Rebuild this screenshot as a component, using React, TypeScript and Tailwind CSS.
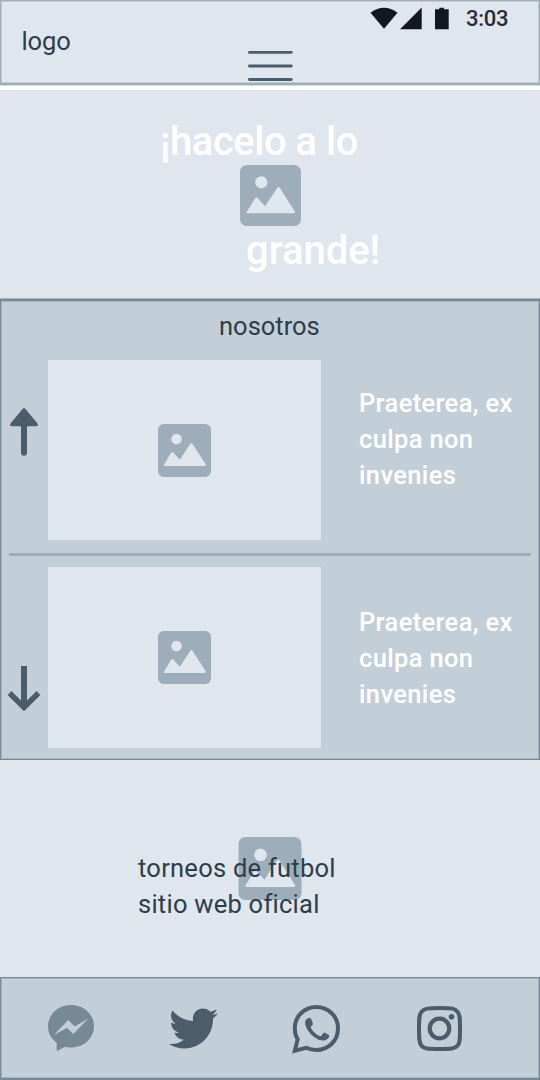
import { FaTwitter } from "react-icons/fa";

function Picture({ className }: { className: string }) {
  return (
    <svg viewBox="0 0 60 60" className={className} aria-hidden="true">
      <rect width="60" height="60" rx="6.5" fill="#9dadba" />
      <circle cx="21" cy="17" r="6" fill="#dfe6ee" />
      <path
        d="M6.8 46 L15 32.4 Q16 31 17.2 32.3 L24.7 40.6 L36.6 22.3 Q37.8 20.8 39 22.3 L53.8 45.4 Q54.5 47.5 53 47.5 H7.5 Q5.9 47.5 6.8 46 Z"
        fill="#dfe6ee"
      />
    </svg>
  );
}

function StatusIcons() {
  return (
    <svg viewBox="0 0 80 24" className="h-6 w-20" fill="#101820" aria-hidden="true">
      <path d="M0.5 6.8 Q14 -3.2 27.5 6.8 L14 22.8 Z" />
      <path d="M30 23.3 L51.7 1.5 V23.3 Z" />
      <path d="M65 3.2 H69.3 V1.8 H74 V3.2 H78.7 V23.3 H65 Z" />
    </svg>
  );
}

function Header() {
  return (
    <header className="flex h-[85px] border border-b-2 border-[#9dadba] bg-[#dfe6ee] shadow-[inset_0_0_0_1px_#c0cbd5,0_1px_0_#d5dde4]">
      <div className="w-[246.5px] pt-[23px] pl-[20.5px] text-[25.5px] leading-[34px] tracking-[-0.1px]">logo</div>
      <svg viewBox="0 0 46 32" className="mt-[49px] h-8 w-[46px] shrink-0" stroke="#4b5d6b" strokeWidth="2.8" strokeLinecap="round">
        <path d="M1.4 2.4 H43.3 M1.4 16 H43.3 M1.4 29.5 H43.3" />
      </svg>
      <div className="flex flex-1 items-start pt-[5px] pl-[76.5px]">
        <StatusIcons />
        <span className="ml-4 pt-px text-[22px] leading-6 font-medium tracking-[-0.3px] text-[#252d34]">3:03</span>
      </div>
    </header>
  );
}

function Story({ first }: { first?: boolean }) {
  return (
    <article className="flex pl-[6px]">
      <div className={first ? "w-[41px] pt-[46px]" : "w-[41px] pt-[98px]"}>
        {first ? (
          <svg viewBox="0 0 34 50" className="h-[50px] w-[34px]" fill="#4b5d6b">
            <path d="M15.5 2.9 Q17 1.5 18.5 2.9 L30.5 17.4 Q31.8 20 29.2 20.3 H20 V46.8 A3 3 0 0 1 14 46.8 V20.3 H4.8 Q2.2 20 3.5 17.4 Z" />
          </svg>
        ) : (
          <svg viewBox="0 0 34 50" className="h-[50px] w-[34px]" fill="none" stroke="#4b5d6b">
            <path d="M17 1 V42" strokeWidth="6" />
            <path d="M2.5 28 L17 42.3 L31.5 28" strokeWidth="5.5" />
          </svg>
        )}
      </div>
      <div className={first ? "flex h-[180px] w-[273px] justify-center bg-[#dfe6ee] pt-[63.5px]" : "flex h-[181px] w-[273px] justify-center bg-[#dfe6ee] pt-[63.5px]"}>
        <Picture className="h-[53px] w-[53px]" />
      </div>
      <p className={first ? "w-[170px] pt-[25px] pl-[38px] whitespace-nowrap text-[25.5px] leading-9 font-medium tracking-[0.35px] text-white" : "w-[170px] pt-[37px] pl-[38px] whitespace-nowrap text-[25.5px] leading-9 font-medium tracking-[0.35px] text-white"}>
        Praeterea, ex<br />culpa non<br />invenies
      </p>
    </article>
  );
}

function Footer() {
  return (
    <footer className="flex h-[103px] items-start border border-b-2 border-[#788996] bg-[#c3cfd8] pt-[26px] pl-[46px] shadow-[inset_0_0_0_1px_#a6b4bf]">
      <svg viewBox="0 0 48 50" className="h-[50px] w-12" fill="#788996">
        <path d="M24 1 C11 1 1 10.4 1 22.3 C1 29.3 4.3 35 9.7 38.7 V47.3 L18 42.8 C20 43.4 22 43.6 24 43.6 C37 43.6 47 34.2 47 22.3 C47 10.4 37 1 24 1 Z" />
        <path d="M7 31 L21.2 16 L27.6 22.5 L41 14.7 L26.3 30 L20 23.7 Z" fill="#c3cfd8" />
      </svg>
      <FaTwitter className="ml-[74px] h-[49px] w-[49px] text-[#4b5d6b]" />
      <svg viewBox="0 0 52 52" className="ml-[73px] h-[52px] w-[52px]" fill="none" stroke="#4b5d6b">
        <path d="M6.7 35.2 L3.8 46.8 L15.2 43.8 C18.5 45.3 21.8 46 25.3 46 C37.5 46 47 36.5 47 24.5 C47 12.5 37.5 3 25.3 3 C13 3 3.8 12.5 3.8 24.5 C3.8 28.4 4.7 32 6.7 35.2 Z" strokeWidth="4" />
        <path d="M14.2 17.2 C14.9 14.3 19.2 12.8 20.3 15.2 L21.8 19.2 C22.5 21.7 18.8 22 20 24 C22 27.7 25.4 31 29.3 32.3 C31.2 32.5 31.3 28.5 34 28.8 L37.7 31 C39.5 32.4 36.8 35.5 34 36.2 C25.5 38.3 13.2 25.8 14.2 17.2 Z" fill="#4b5d6b" stroke="none" />
      </svg>
      <svg viewBox="0 0 50 50" className="ml-[72px] h-[50px] w-[50px]" fill="none" stroke="#4b5d6b" strokeWidth="4">
        <path d="M24.5 4 C38 4 40 4.3 42.7 8 C45.2 10.7 45 15 45 24.5 C45 34 45.2 38.5 42.7 41.5 C40 45 36 45 24.5 45 C13 45 9 45 6.3 41.5 C4 38.5 4 34 4 24.5 C4 15 4 10.7 6.3 8 C9 4.3 13 4 24.5 4 Z" />
        <circle cx="24.5" cy="24.5" r="9.8" strokeWidth="4.2" />
        <circle cx="36.5" cy="12.7" r="2.8" fill="#4b5d6b" stroke="none" />
      </svg>
    </footer>
  );
}

export default function App() {
  return (
    <main className="flex h-[1080px] w-[540px] flex-col overflow-hidden bg-white font-[Roboto,sans-serif] text-[#2d3d49]">
      <Header />
      <section className="mt-[5px] flex h-[209px] flex-col bg-[#dfe6ee] pt-[29px] text-[40px] leading-[46px] font-medium text-white">
        <h1 className="pl-[160px] whitespace-nowrap tracking-[-0.5px]">¡hacelo a lo</h1>
        <Picture className="-mt-[0.5px] ml-[239.5px] h-[61px] w-[61px]" />
        <span className="mt-[2.5px] pl-[246px] tracking-[-0.05px]">grande!</span>
      </section>
      <section className="flex h-[461px] flex-col border border-t-2 border-[#788996] bg-[#c3cfd8] shadow-[inset_0_0_0_1px_#a6b4bf,0_-1px_0_#a6b4bf]">
        <h2 className="h-[59px] pt-[7px] pl-[218px] text-[25.5px] leading-9">nosotros</h2>
        <Story first />
        <div className="mx-2 mt-[13px] mb-[11px] h-[3px] shrink-0 bg-[#9dadba]" />
        <Story />
      </section>
      <section className="flex h-[217px] flex-col items-center bg-[#dfe6ee] pt-[77px]">
        <Picture className="h-[63px] w-[64px] shrink-0" />
        <p className="relative -mt-[50px] w-full pl-[138px] text-[25.5px] leading-9 tracking-[0.25px]">
          torneos de futbol<br />sitio web oficial
        </p>
      </section>
      <Footer />
    </main>
  );
}
